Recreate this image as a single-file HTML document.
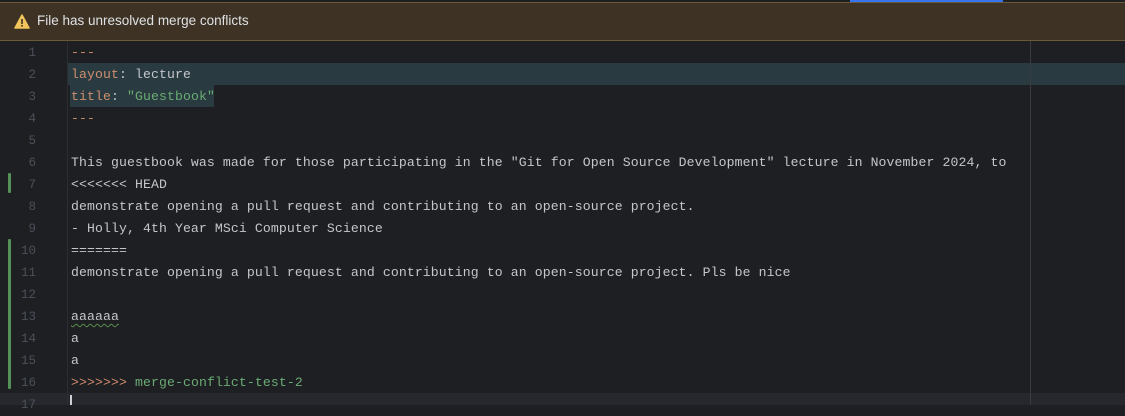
<!DOCTYPE html>
<html><head><style>
body{margin:0;width:1125px;height:405px;background:#1e1f22;overflow:hidden;position:relative;font-family:"Liberation Mono",monospace;}
.top{position:absolute;left:0;top:0;width:1125px;height:2px;background:#1e1f22}
.blue{position:absolute;left:850px;top:0;width:153px;height:2px;background:#3574f0}
.banner{position:absolute;left:0;top:2px;width:1125px;height:37px;background:#3d3223;border-top:1px solid #6b5a38;border-bottom:1px solid #6b5a38;font-family:"Liberation Sans",sans-serif;font-size:13.5px;color:#dfe1e5;}
.banner span{position:absolute;left:37px;top:10px}
.warn{position:absolute;left:14px;top:11px}
.hl2{position:absolute;left:67px;top:63px;width:1058px;height:22px;background:#293b40}
.hl3{position:absolute;left:70px;top:85px;width:144px;height:22px;background:#293b40}
.div{position:absolute;left:67px;top:41px;width:1px;height:364px;background:#2b2d30}
.margin{position:absolute;left:1030px;top:41px;width:1px;height:364px;background:#393b40}
.cur{position:absolute;left:0;top:393px;width:1125px;height:12px;background:#26282e}
.caret{position:absolute;left:70px;top:395px;width:2px;height:10px;background:#ced0d6}
.bar{position:absolute;left:8px;width:3px;background:#549159;border-radius:1px}
.ln{position:absolute;left:0;width:36px;text-align:right;font-size:12.5px;color:#4b5059;line-height:22px;margin-top:1px}
.tx{position:absolute;left:71px;font-size:13.15px;letter-spacing:0.11px;color:#c4c6cc;line-height:22px;white-space:pre;margin-top:1px}
.o{color:#cf8e6d}.g{color:#6aab73}
.sq{text-decoration:underline wavy #5c8a4f;text-underline-offset:3px;text-decoration-thickness:1px}
</style></head><body>
<div class="top"></div><div class="blue"></div>
<div class="banner"><svg class="warn" width="16" height="15" viewBox="0 0 16 15"><path d="M8 1L15 14H1Z" fill="#f2c55c" stroke="#f2c55c" stroke-linejoin="round" stroke-width="1.5"/><rect x="7.2" y="5" width="1.6" height="5" fill="#3d3223"/><rect x="7.2" y="11" width="1.6" height="1.6" fill="#3d3223"/></svg><span>File has unresolved merge conflicts</span></div>
<div class="hl2"></div><div class="hl3"></div>
<div class="cur"></div>
<div class="div"></div><div class="margin"></div>
<div class="bar" style="top:173px;height:20px"></div>
<div class="bar" style="top:239px;height:150px"></div>
<div class="ln" style="top:41px">1</div>
<div class="ln" style="top:63px">2</div>
<div class="ln" style="top:85px">3</div>
<div class="ln" style="top:107px">4</div>
<div class="ln" style="top:129px">5</div>
<div class="ln" style="top:151px">6</div>
<div class="ln" style="top:173px">7</div>
<div class="ln" style="top:195px">8</div>
<div class="ln" style="top:217px">9</div>
<div class="ln" style="top:239px">10</div>
<div class="ln" style="top:261px">11</div>
<div class="ln" style="top:283px">12</div>
<div class="ln" style="top:305px">13</div>
<div class="ln" style="top:327px">14</div>
<div class="ln" style="top:349px">15</div>
<div class="ln" style="top:371px">16</div>
<div class="ln" style="top:393px">17</div>
<div class="tx" style="top:41px"><span class="o">---</span></div>
<div class="tx" style="top:63px"><span class="o">layout</span>: lecture</div>
<div class="tx" style="top:85px"><span class="o">title</span>: <span class="g">"Guestbook"</span></div>
<div class="tx" style="top:107px"><span class="o">---</span></div>
<div class="tx" style="top:151px">This guestbook was made for those participating in the "Git for Open Source Development" lecture in November 2024, to</div>
<div class="tx" style="top:173px">&lt;&lt;&lt;&lt;&lt;&lt;&lt; HEAD</div>
<div class="tx" style="top:195px">demonstrate opening a pull request and contributing to an open-source project.</div>
<div class="tx" style="top:217px">- Holly, 4th Year MSci Computer Science</div>
<div class="tx" style="top:239px">=======</div>
<div class="tx" style="top:261px">demonstrate opening a pull request and contributing to an open-source project. Pls be nice</div>
<div class="tx" style="top:305px"><span class="sq">aaaaaa</span></div>
<div class="tx" style="top:327px">a</div>
<div class="tx" style="top:349px">a</div>
<div class="tx" style="top:371px"><span class="o">&gt;&gt;&gt;&gt;&gt;&gt;&gt;</span> <span class="g">merge-conflict-test-2</span></div>
<div class="caret"></div>
</body></html>
